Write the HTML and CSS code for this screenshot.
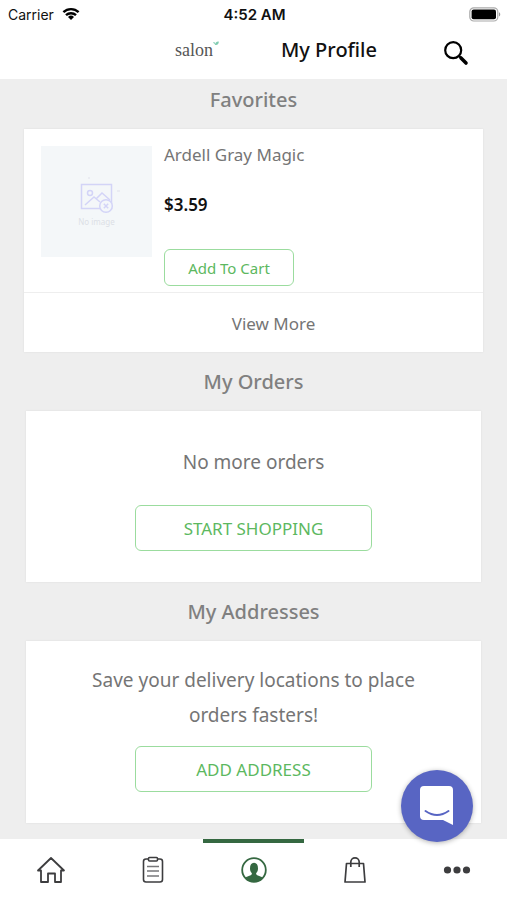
FILE: index.html
```html
<!DOCTYPE html>
<html lang="en">
<head>
<meta charset="utf-8">
<meta name="viewport" content="width=device-width, initial-scale=1">
<title>My Profile</title>
<link rel="stylesheet" href="styles.css">
</head>
<body>
<div class="app">
  <div class="status">
    <div class="carrier">
      <span>Carrier</span>
      <svg width="18" height="14" viewBox="0 0 18 14" aria-hidden="true"><g fill="none" stroke="#000" stroke-width="2.4"><path d="M1.4 5.2a11 11 0 0 1 15.2 0"/><path d="M4 8.2a7.2 7.2 0 0 1 10 0"/></g><path d="M9 13 6 10a4.3 4.3 0 0 1 6 0z"/></svg>
    </div>
    <time class="clock">4:52 AM</time>
    <svg class="battery" width="32" height="15" viewBox="0 0 32 15" role="img" aria-label="Battery full"><rect x=".8" y=".8" width="28" height="13.2" rx="4" fill="#fff" stroke="#aaa" stroke-width="1.2"/><rect x="2.6" y="2.6" width="24.4" height="9.6" rx="2" fill="#000"/><path d="M30 5.3c1.7.6 1.7 3.6 0 4.2z" fill="#999"/></svg>
  </div>
  <header class="header">
    <div class="logo"><span>salon</span><svg width="6" height="9" viewBox="0 0 6 9" aria-hidden="true"><path d="M0 2 2 2.500 1.500 4.500zM2 5c0-2.500 1.500-3.700 3.800-3.500C5.800 4 4.500 5.500 2 5z" fill="#7fcbb0"/></svg></div>
    <h1 class="title">My Profile</h1>
    <button class="search" type="button" aria-label="Search"><svg width="26" height="26" viewBox="0 0 26 26" aria-hidden="true"><circle cx="10.200" cy="10.200" r="8" fill="none" stroke="#000" stroke-width="2.200"/><path d="m16 16 1.500 1.500" stroke="#000" stroke-width="2"/><path d="m18 18 5 5" stroke="#000" stroke-width="3.600" stroke-linecap="round"/></svg></button>
  </header>

  <main class="content">
    <section class="section">
      <h2 class="heading">Favorites</h2>
      <div class="card card-wide">
        <article class="product">
          <div class="thumb">
            <svg width="50" height="40" viewBox="0 0 50 40" fill="none" stroke="#d3d4f7" stroke-width="1.500" aria-hidden="true"><rect x="9.500" y="7.500" width="30" height="24"/><circle cx="18" cy="16" r="2.500"/><path d="m13 28 9-8 6 5m-4-3 6-6 8 7"/><circle cx="34" cy="29" r="6.300" fill="#f4f7fa"/><path d="m31.800 26.800 4.400 4.400m0-4.400-4.400 4.400"/><path d="M17-1v3M45 14h3" stroke="#e6e9f0"/></svg>
            <span>No image</span>
          </div>
          <div class="details">
            <h3 class="name">Ardell Gray Magic</h3>
            <p class="price">$3.59</p>
            <button class="outline small" type="button">Add To Cart</button>
          </div>
        </article>
        <a class="more" href="#favorites">View More</a>
      </div>
    </section>

    <section class="section">
      <h2 class="heading">My Orders</h2>
      <div class="card empty orders">
        <p>No more orders</p>
        <button class="outline" type="button">START SHOPPING</button>
      </div>
    </section>

    <section class="section">
      <h2 class="heading">My Addresses</h2>
      <div class="card empty addresses">
        <p>Save your delivery locations to place orders fasters!</p>
        <button class="outline" type="button">ADD ADDRESS</button>
      </div>
    </section>
  </main>

  <button class="chat" type="button" aria-label="Open chat"><svg width="36" height="42" viewBox="0 0 36 42" aria-hidden="true"><path d="M5 1h25q4 0 4 4v35l-10-5H5q-4 0-4-4V5q0-4 4-4z" fill="#fff"/><path d="M6.500 26q11.500 8 23 0" fill="none" stroke="#5865c3" stroke-width="2" stroke-linecap="round"/></svg></button>

  <nav class="tabs" aria-label="Main">
    <a href="#home" aria-label="Home"><svg width="30" height="30" viewBox="0 0 30 30" fill="none" stroke="#3d3d3f" stroke-width="1.800" stroke-linejoin="round" aria-hidden="true"><path d="M2 15.500 15 3l13 12.500h-3V27h-6v-8.500h-7V27H5V15.500z"/></svg></a>
    <a href="#orders" aria-label="Orders"><svg width="30" height="30" viewBox="0 0 30 30" fill="none" stroke="#3d3d3f" stroke-width="1.600" aria-hidden="true"><rect x="5.500" y="4" width="19" height="23" rx="2.500"/><rect x="10.500" y="2.500" width="9" height="3.500" rx="1" fill="#fff"/><path d="M9 11.500h12M9 16h12M9 21h12" stroke="#77777a"/></svg></a>
    <a class="active" href="#profile" aria-label="Profile" aria-current="page"><svg width="30" height="30" viewBox="0 0 30 30" aria-hidden="true"><circle cx="15" cy="15" r="11.800" fill="#fff" stroke="#356841" stroke-width="1.800"/><path d="M12.900 18.200c-1.200-1.200-1.900-2.700-1.900-4.700 0-3.600 1.400-5.700 4-5.700s4 2.100 4 5.700c0 2-.7 3.500-1.900 4.700 0 1.800 1 2 3.200 2.700 1.500.5 2.500 1 3.500 2A11.800 11.800 0 0 1 6.200 22.900c1-1 2-1.500 3.500-2 2.200-.7 3.200-.9 3.200-2.700z" fill="#356841"/></svg></a>
    <a href="#bag" aria-label="Bag"><svg width="30" height="30" viewBox="0 0 30 30" fill="none" stroke="#3d3d3f" stroke-width="1.700" stroke-linejoin="round" aria-hidden="true"><path d="M6.500 8.500h17L25 27H5z"/><path d="M10.800 12V7a4.200 4.200 0 0 1 8.400 0v5"/></svg></a>
    <a href="#menu" aria-label="More"><svg width="30" height="30" viewBox="0 0 30 30" fill="#3d3d3f" aria-hidden="true"><circle cx="5.500" cy="15" r="3.600"/><circle cx="15" cy="15" r="3.600"/><circle cx="24.500" cy="15" r="3.600"/></svg></a>
  </nav>
</div>
</body>
</html>
```

FILE: styles.css
```css
* { box-sizing: border-box; }

body {
  margin: 0;
  background: #eee;
  color: #757575;
  font-family: "Noto Sans", sans-serif;
}

h1, h2, h3, p { margin: 0; }
button { font: inherit; cursor: pointer; }
a { color: inherit; text-decoration: none; }
svg { display: block; flex: none; }

.app {
  display: flex;
  flex-direction: column;
  min-height: 100vh;
}

.status {
  display: grid;
  grid-template-columns: 1fr auto 1fr;
  align-items: center;
  height: 28px;
  padding: 0 6px 0 8px;
  background: #fff;
  color: #111;
  font-family: Inter, sans-serif;
  font-size: 14px;
}

.carrier {
  display: flex;
  align-items: center;
  gap: 8px;
}

.clock {
  font-size: 15px;
  font-weight: 600;
}

.battery { justify-self: end; }

.header {
  display: grid;
  grid-template-columns: 1fr auto 1fr;
  align-items: start;
  height: 51px;
  padding: 9px 38px 0 175px;
  background: #fff;
}

.logo {
  display: flex;
  align-items: flex-start;
  padding-top: 3px;
  color: #555;
  font-family: "Liberation Serif", serif;
  font-size: 18px;
  line-height: 20px;
}

.title {
  margin-left: 14px;
  color: #111;
  font-size: 20px;
  font-weight: 500;
  line-height: 26px;
}

.search {
  justify-self: end;
  padding: 3px 0 0;
  border: 0;
  background: none;
}

.content {
  display: flex;
  flex: 1;
  flex-direction: column;
  gap: 9px;
  padding-bottom: 15px;
}

.heading {
  padding: 8px 0 16px;
  color: #808080;
  font-size: 20px;
  font-weight: 500;
  line-height: 26px;
  text-align: center;
}

.card {
  margin: 0 26px;
  background: #fff;
  box-shadow: 0 0 2px #ddd;
}

.card-wide { margin: 0 24px; }

.product {
  display: flex;
  gap: 12px;
  padding: 17px 17px 6px;
}

.thumb {
  display: flex;
  flex-direction: column;
  align-items: center;
  width: 111px;
  height: 111px;
  padding-top: 31px;
  background: #f4f7f9;
  color: #dcdfe6;
  font-size: 8px;
  line-height: 10px;
}

.details {
  display: flex;
  flex-direction: column;
  align-items: flex-start;
}

.name {
  font-size: 17px;
  font-weight: 400;
  line-height: 18px;
}

.price {
  margin: 28px 0 31px;
  color: #111;
  font-size: 17px;
  font-weight: 600;
  line-height: 26px;
}

.outline {
  width: 237px;
  height: 46px;
  padding: 0;
  border: 1px solid #9bdc9e;
  border-radius: 6px;
  background: #fff;
  color: #5cb860;
  font-size: 17px;
}

.small {
  width: 130px;
  height: 37px;
  font-size: 15px;
}

.more {
  display: block;
  padding: 18px 0 15px 40px;
  border-top: 1px solid #eee;
  font-size: 17px;
  line-height: 26px;
  text-align: center;
}

.empty {
  display: flex;
  flex-direction: column;
  align-items: center;
  padding: 22px 50px 31px;
  font-size: 19px;
  line-height: 35px;
  text-align: center;
}

.orders {
  gap: 25px;
  padding-top: 34px;
}

.addresses { gap: 13px; }

.chat {
  position: fixed;
  right: 34px;
  bottom: 58px;
  z-index: 2;
  display: grid;
  place-items: center;
  width: 72px;
  height: 72px;
  padding: 0;
  border: 0;
  border-radius: 50%;
  background: #5865c3;
  box-shadow: 0 1px 5px rgba(0, 0, 0, .3);
}

.tabs {
  position: sticky;
  bottom: 0;
  display: grid;
  grid-template-columns: repeat(5, 1fr);
  height: 61px;
  background: #fff;
}

.tabs a {
  display: grid;
  place-items: center;
  padding: 0 0 4px 1px;
  border-top: 4px solid transparent;
}

.tabs .active { border-top-color: #356841; }
```
